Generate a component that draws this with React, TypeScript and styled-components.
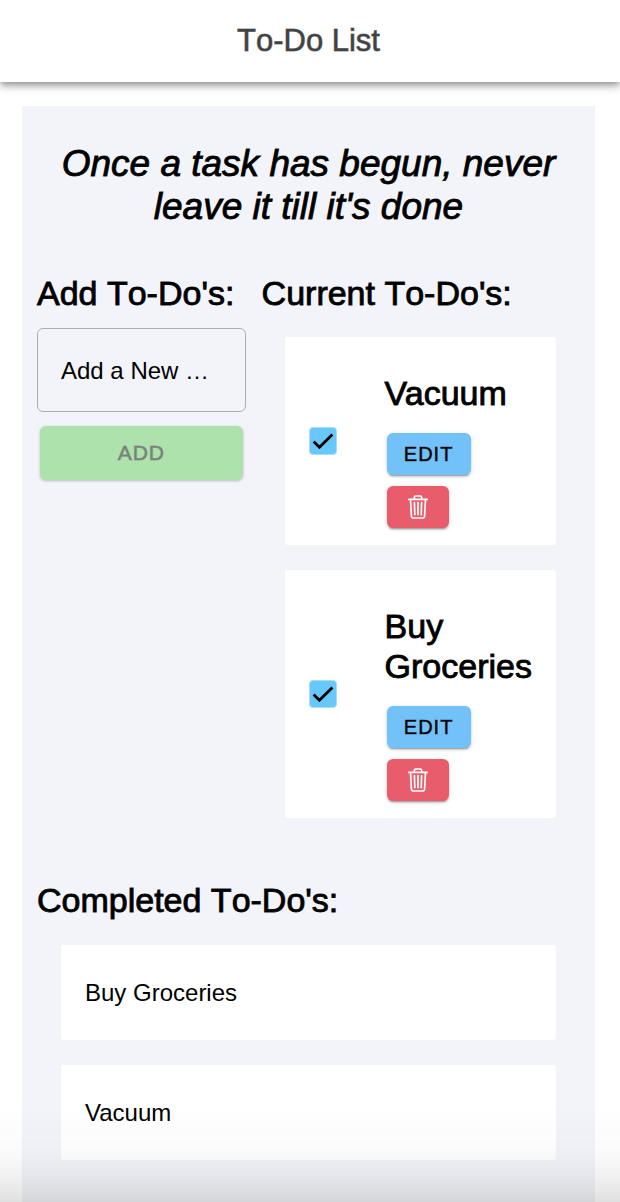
import React, { useState } from "react";
import styled, { createGlobalStyle, css } from "styled-components";

const GlobalStyle = createGlobalStyle`
  *, *::before, *::after { box-sizing: border-box; }
  body {
    margin: 0;
    background: #fff;
    color: #000;
    font-family: "Liberation Sans", Arial, sans-serif;
  }
  h1, h2, h3, ul { margin: 0; padding: 0; }
  ul { list-style: none; }
`;

// Liberation Sans has no medium weight: an outline thickens the regular one.
const medium = css`
  font-weight: 400;
  -webkit-text-stroke: 1px rgba(0, 0, 0, 0.9);
`;

const raised = css`
  box-shadow: 0 3px 1px -2px rgba(0, 0, 0, 0.2), 0 2px 2px 0 rgba(0, 0, 0, 0.14),
    0 1px 5px 0 rgba(0, 0, 0, 0.12);
`;

const Header = styled.header`
  height: 82px;
  display: flex;
  align-items: center;
  justify-content: center;
  padding-right: 3px;
  background: #fff;
  box-shadow: 0 3px 6px -1px rgba(0, 0, 0, 0.3), 0 5px 8px 0 rgba(0, 0, 0, 0.14),
    0 1px 14px 0 rgba(0, 0, 0, 0.12);
`;

const Title = styled.h1`
  color: #424242;
  font-size: 31px;
  line-height: 40px;
  font-weight: 400;
  font-kerning: none;
  -webkit-text-stroke: 1px rgba(66, 66, 66, 0.6);
`;

const Panel = styled.main`
  margin: 24px 25px 0 22px;
  padding: 36px 15px 42px;
  background: #f3f4f9;
`;

const Quote = styled.h2`
  ${medium}
  padding: 0 24px;
  font-size: 37px;
  line-height: 43px;
  font-style: italic;
  text-align: center;
`;

const Columns = styled.div`
  display: grid;
  grid-template-columns: 19fr 29fr;
  column-gap: 16px;
  align-items: start;
  margin-top: 45px;
`;

const SectionTitle = styled.h2`
  ${medium}
  font-size: 34px;
  line-height: 40px;
  font-kerning: none;
  white-space: nowrap;
`;

const AddForm = styled.form`
  display: flex;
  flex-direction: column;
  gap: 14px;
  margin-top: 15px;
`;

const TaskInput = styled.input`
  width: 100%;
  height: 84px;
  padding: 2px 23px 0;
  border: 1px solid #afafb2;
  border-radius: 6px;
  background: transparent;
  color: #000;
  font: 24px "Liberation Sans", Arial, sans-serif;
  text-overflow: ellipsis;
  &::placeholder { color: #000; opacity: 1; }
`;

const AddButton = styled.button`
  ${raised}
  height: 54px;
  margin: 0 3px;
  border: 0;
  border-radius: 6px;
  background: #ade2ac;
  color: #7a857a;
  font: 21px "Liberation Sans", Arial, sans-serif;
  letter-spacing: 1px;
  -webkit-text-stroke: 1px rgba(118, 124, 118, 0.5);
  &:disabled {
    box-shadow: 0 1px 3px rgba(0, 0, 0, 0.24);
  }
`;

const TaskList = styled.ul`
  display: flex;
  flex-direction: column;
  gap: 25px;
  margin: 24px 24px 0 23px;
`;

const TaskCard = styled.li`
  display: grid;
  grid-template-columns: 28px 1fr;
  column-gap: 48px;
  align-items: center;
  padding: 0 16px 0 24px;
  border-radius: 3px;
  background: #fff;
`;

const TaskName = styled.h3`
  ${medium}
  font-size: 34px;
  line-height: 40px;
`;

const CheckWrap = styled.label`
  position: relative;
  display: block;
  width: 28px;
  height: 28px;
`;

const CheckBox = styled.input`
  appearance: none;
  display: block;
  width: 28px;
  height: 28px;
  margin: 0;
  border: 1px solid #a9dcf8;
  border-radius: 4px;
  background: #fff;
  &:checked { background: #68c8fc; }
  &:not(:checked) + svg { display: none; }
`;

const CheckMark = styled.svg`
  position: absolute;
  inset: 0;
  pointer-events: none;
`;

const TaskBody = styled.div`
  display: flex;
  flex-direction: column;
  align-items: flex-start;
  min-width: 0;
  padding: 36px 0 17px;
`;

const Actions = styled.div`
  display: flex;
  flex-direction: column;
  align-items: flex-start;
  gap: 11px;
  margin: 20px 2px 0;
`;

const ActionButton = styled.button<{ $tone: "edit" | "remove" }>`
  ${raised}
  display: flex;
  align-items: center;
  justify-content: center;
  width: ${({ $tone }) => ($tone === "edit" ? "84px" : "62px")};
  height: 42px;
  padding: 0;
  border: 0;
  border-radius: 6px;
  background: ${({ $tone }) => ($tone === "edit" ? "#72c1f9" : "#e95c6b")};
  color: ${({ $tone }) => ($tone === "edit" ? "#000" : "#fff")};
  font: 20px "Liberation Sans", Arial, sans-serif;
  letter-spacing: 1px;
  -webkit-text-stroke: 1px rgba(0, 0, 0, 0.4);
`;

const Completed = styled.section`
  margin-top: 62px;
`;

const DoneList = styled.ul`
  display: flex;
  flex-direction: column;
  gap: 25px;
  margin: 25px 24px 0;
`;

const DoneItem = styled.li`
  padding: 32px 24px 31px;
  border-radius: 3px;
  background: #fff;
  font-size: 24px;
  line-height: 32px;
`;

const BottomShade = styled.div`
  position: fixed;
  left: 0;
  right: 0;
  bottom: 0;
  height: 96px;
  pointer-events: none;
  background: linear-gradient(
    to bottom,
    rgba(0, 0, 0, 0),
    rgba(0, 0, 0, 0.02) 50%,
    rgba(0, 0, 0, 0.06) 75%,
    rgba(0, 0, 0, 0.12)
  );
`;

function TrashIcon() {
  return (
    <svg
      width="22"
      height="26"
      viewBox="0 0 22 26"
      fill="none"
      stroke="currentColor"
      strokeWidth="1.7"
      strokeLinecap="round"
      strokeLinejoin="round"
      aria-hidden="true"
    >
      <path d="M1.8 5.4 H20.2" />
      <path d="M7.3 5 V3.6 Q7.3 2 8.9 2 H13.1 Q14.7 2 14.7 3.6 V5" />
      <path d="M3.5 5.6 L4.4 22 Q4.5 24 6.5 24 H15.5 Q17.5 24 17.6 22 L18.5 5.6" />
      <path d="M7.4 8.6 L7.8 20.6 M11 8.6 V20.6 M14.6 8.6 L14.2 20.6" />
    </svg>
  );
}

function Task({ name }: { name: string }) {
  const [checked, setChecked] = useState(true);
  return (
    <TaskCard>
      <CheckWrap>
        <CheckBox
          type="checkbox"
          aria-label={name}
          checked={checked}
          onChange={(e) => setChecked(e.target.checked)}
        />
        <CheckMark viewBox="0 0 28 28" fill="none" stroke="#000" strokeWidth="2.8">
          <path d="M4.6 14.6 L10.4 20.2 L23.4 7.4" />
        </CheckMark>
      </CheckWrap>
      <TaskBody>
        <TaskName>{name}</TaskName>
        <Actions>
          <ActionButton type="button" $tone="edit">EDIT</ActionButton>
          <ActionButton type="button" $tone="remove" aria-label={`Delete ${name}`}>
            <TrashIcon />
          </ActionButton>
        </Actions>
      </TaskBody>
    </TaskCard>
  );
}

export default function App() {
  const [draft, setDraft] = useState("");
  return (
    <>
      <GlobalStyle />
      <Header>
        <Title>To-Do List</Title>
      </Header>
      <Panel>
        <Quote>Once a task has begun, never leave it till it's done</Quote>
        <Columns>
          <section>
            <SectionTitle>Add To-Do's:</SectionTitle>
            <AddForm onSubmit={(e) => e.preventDefault()}>
              <TaskInput
                type="text"
                aria-label="Add a New To-Do"
                placeholder="Add a New …"
                value={draft}
                onChange={(e) => setDraft(e.target.value)}
              />
              <AddButton type="submit" disabled={!draft}>ADD</AddButton>
            </AddForm>
          </section>
          <section>
            <SectionTitle>Current To-Do's:</SectionTitle>
            <TaskList>
              <Task name="Vacuum" />
              <Task name="Buy Groceries" />
            </TaskList>
          </section>
        </Columns>
        <Completed>
          <SectionTitle>Completed To-Do's:</SectionTitle>
          <DoneList>
            <DoneItem>Buy Groceries</DoneItem>
            <DoneItem>Vacuum</DoneItem>
          </DoneList>
        </Completed>
      </Panel>
      <BottomShade />
    </>
  );
}
